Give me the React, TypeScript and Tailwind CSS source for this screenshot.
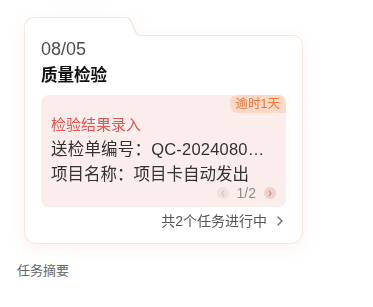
import { ChevronRight } from 'lucide-react';

const font = { fontFamily: '"Liberation Sans", "Noto Sans CJK SC", sans-serif' };

function FolderTab() {
  return (
    <div className="relative z-10 -mb-px flex items-start">
      <div className="h-[19px] w-[98px] rounded-tl-[10px] border-l border-t border-[#f6e4dd] bg-white" />
      <svg width="18" height="19" viewBox="0 0 18 19" className="block">
        <path d="M0 0 H3 C7 0 8 2 10 6 L13 14 C14.5 17.5 16 18.5 18 18.5 V19 H0 Z" fill="#ffffff" />
        <path
          d="M0 0.5 H3 C7 0.5 8 2 10 6 L13 14 C14.5 17.5 16 18.5 18 18.5"
          fill="none"
          stroke="#f6e4dd"
          strokeWidth="1.2"
        />
      </svg>
    </div>
  );
}

function Pager() {
  return (
    <div className="-mt-[2px] flex h-[16px] items-center justify-end gap-[8px]">
      <span className="flex h-[12px] w-[12px] items-center justify-center rounded-full bg-[#f2e0dd]">
        <svg width="6" height="7" viewBox="0 0 6 7">
          <path d="M3.8 1.2 L2 3.5 L3.8 5.8" fill="none" stroke="#d6c0bd" strokeWidth="1.1" strokeLinecap="round" />
        </svg>
      </span>
      <span className="text-[14px] leading-[16px] text-[#9b8a88]">1/2</span>
      <span className="flex h-[12px] w-[12px] items-center justify-center rounded-full bg-[#f1d0c9]">
        <svg width="6" height="7" viewBox="0 0 6 7">
          <path d="M2.2 1.2 L4 3.5 L2.2 5.8" fill="none" stroke="#c48a84" strokeWidth="1.1" strokeLinecap="round" />
        </svg>
      </span>
    </div>
  );
}

export default function App() {
  return (
    <div className="min-h-[307px] bg-white pl-[17px] pt-[17px]" style={font}>
      <div className="ml-[7px] w-[279px] drop-shadow-[0_4px_8px_rgba(240,185,170,0.2)]">
        <FolderTab />
        <div className="rounded-b-[12px] rounded-tr-[10px] border border-[#f6e4dd] bg-white px-[16px] pb-[12px] pt-[1px]">
          <div className="text-[18px] leading-[24px] text-[#4d4d4d]">08/05</div>
          <div className="mt-[2px] text-[16.5px] font-bold leading-[24px] text-[#111111]">质量检验</div>

          {/* 任务卡片 */}
          <div className="relative mt-[8px] rounded-[8px] bg-[#faedeb] px-[10px] pb-[6px] pt-[17px]">
            <span className="absolute right-0 top-0 rounded-bl-[8px] rounded-tl-[6px] rounded-tr-[8px] bg-[#fcd8c7] px-[6px] text-[12.5px] leading-[18px] text-[#e8773d]">
              逾时1天
            </span>
            <div className="text-[15px] leading-[25px] text-[#e5554f]">检验结果录入</div>
            <div className="whitespace-nowrap text-[16.5px] leading-[25px] tracking-[0.2px] text-[#333333]">
              送检单编号：QC-2024080…
            </div>
            <div className="whitespace-nowrap text-[16.5px] leading-[25px] text-[#333333]">项目名称：项目卡自动发出</div>
            <Pager />
          </div>

          <div className="mt-[4px] flex items-center justify-end gap-[5px] text-[14px] leading-[20px] text-[#555555]">
            <span>共2个任务进行中</span>
            <ChevronRight size={16} strokeWidth={1.8} className="-mr-[2px] text-[#666666]" />
          </div>
        </div>
      </div>

      <div className="mt-[18px] text-[13px] leading-[18px] text-[#666666]">任务摘要</div>
    </div>
  );
}
